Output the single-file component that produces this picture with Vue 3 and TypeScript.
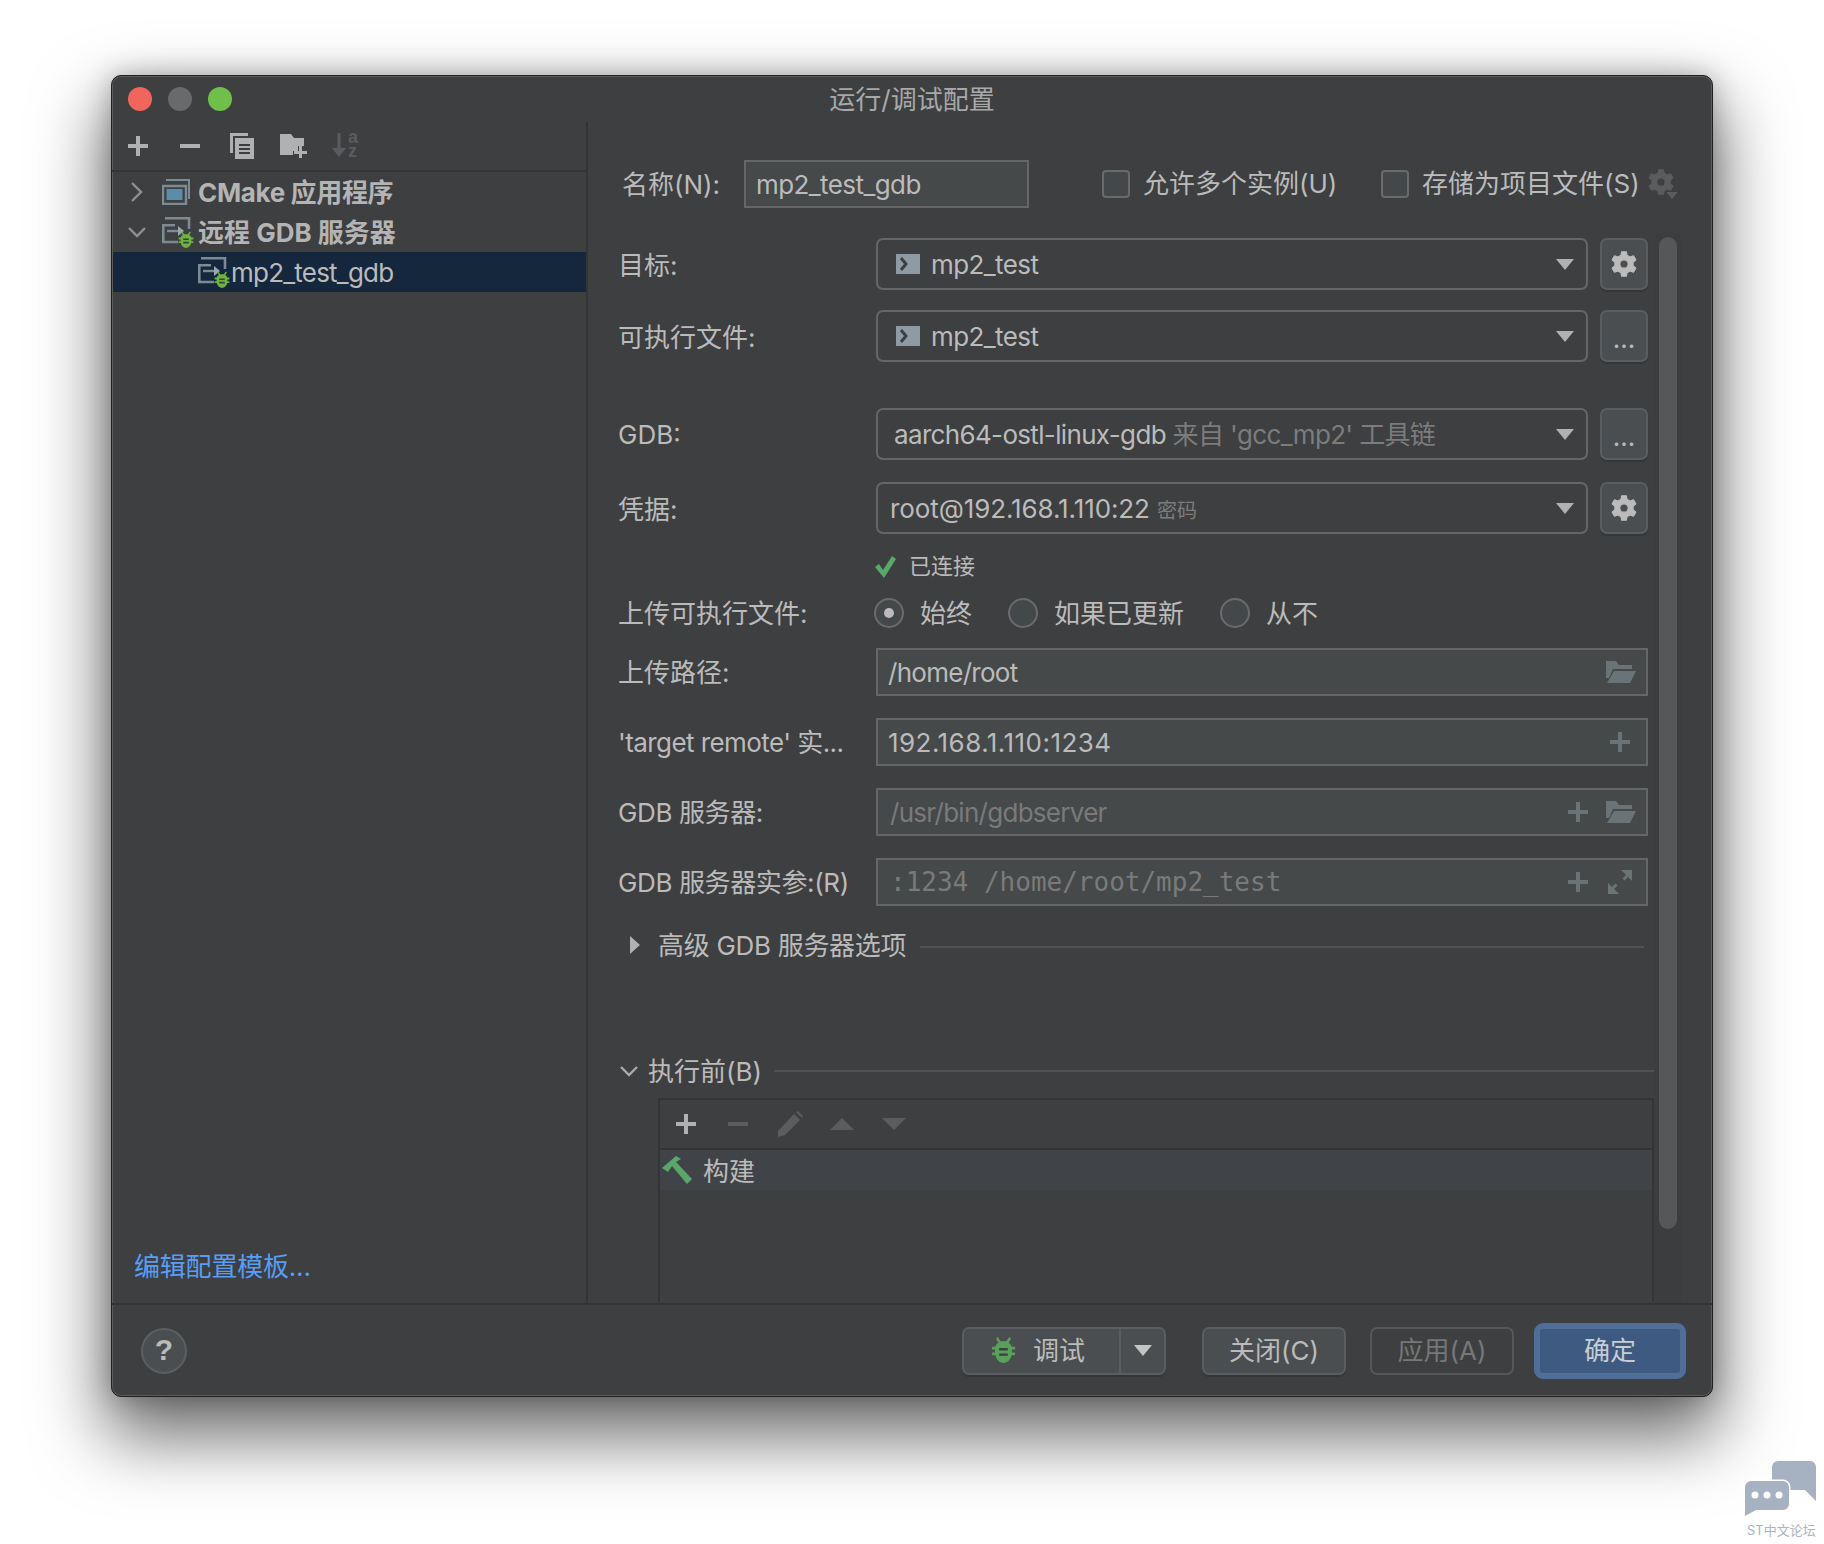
<script setup lang="ts">
function gear(teeth: number, outer: number, root: number, hole: number): string {
  const c = 14
  const step = (Math.PI * 2) / teeth
  const pts: string[] = []
  for (let i = 0; i < teeth; i++) {
    const a = i * step - Math.PI / 2
    const list: [number, number][] = [
      [a - step * 0.18, outer],
      [a + step * 0.18, outer],
      [a + step * 0.32, root],
      [a + step * 0.68, root],
    ]
    for (const [ang, r] of list) {
      pts.push(`${(c + Math.cos(ang) * r).toFixed(2)} ${(c + Math.sin(ang) * r).toFixed(2)}`)
    }
  }
  return `M${pts.join('L')}Z M${c - hole} ${c}a${hole} ${hole} 0 1 0 ${hole * 2} 0a${hole} ${hole} 0 1 0 ${-hole * 2} 0Z`
}
const gearPath = gear(6, 13.5, 10, 4.5)

const radios = [
  { label: '始终', on: true },
  { label: '如果已更新', on: false },
  { label: '从不', on: false },
]
</script>

<template>
  <div class="page">
    <svg class="defs" aria-hidden="true">
      <symbol id="plus" viewBox="0 0 20 20"><path d="M8 0h4v8h8v4h-8v8H8v-8H0V8h8z" fill="currentColor" /></symbol>
      <symbol id="gear" viewBox="0 0 28 28"><path :d="gearPath" fill="currentColor" fill-rule="evenodd" stroke="currentColor" stroke-width="1.2" stroke-linejoin="round" /></symbol>
      <symbol id="term" viewBox="0 0 24 20"><path d="M0 0h24v20H0z" fill="#8f9aa4" /><path d="M5 4l5 6-5 6" fill="none" stroke="#3c3f41" stroke-width="3" /></symbol>
      <symbol id="caret" viewBox="0 0 18 11"><path d="M0 0h18L9 11z" fill="currentColor" /></symbol>
      <symbol id="folder" viewBox="0 0 30 22"><path d="M0 0h10l3 4h13v4H7L3 17H0z M8 10h22l-6 12H1z" fill="currentColor" /></symbol>
      <symbol id="bug" viewBox="0 0 26 28">
        <path d="M7 0l3 4.5h6L19 0l2 1.5-2.8 4.5C20 7 21 8.500 21.500 10H25v3h-3.200v3H25v3h-3.500c-1 4.500-4.500 8-8.500 8s-7.500-3.500-8.500-8H1v-3h3.200v-3H1v-3h3.500C5 8.500 6 7 7.800 6L5 1.500z" fill="currentColor" />
        <path d="M8.500 11.500h9v2.500h-9zM8.500 17h9v2.500h-9z" fill="#3c3f41" />
      </symbol>
      <symbol id="remote" viewBox="0 0 32 30">
        <path d="M3 1.300h24V12" fill="none" stroke="#7c8a94" stroke-width="2.600" />
        <path d="M13 8.300H1.300V25H16" fill="none" stroke="#7c8a94" stroke-width="2.600" />
        <path d="M5 14h12" stroke="#7c8a94" stroke-width="2.400" />
        <path d="M16 9l6 5-6 5z" fill="#9aa7b0" />
      </symbol>
    </svg>

    <div class="window">
      <header class="titlebar">
        <div class="lights">
          <span class="light red"></span>
          <span class="light grey"></span>
          <span class="light green"></span>
        </div>
        <div class="title">运行/调试配置</div>
      </header>

      <div class="main">
        <aside class="left">
          <div class="tools">
            <span class="cell"><svg width="20" height="20" class="ic"><use href="#plus" /></svg></span>
            <span class="cell"><svg width="20" height="4" class="ic"><path d="M0 0h20v4H0z" fill="currentColor" /></svg></span>
            <span class="cell">
              <svg width="24" height="26" viewBox="0 0 24 26" class="ic">
                <path d="M0 0h18v3H3v17H0z" fill="currentColor" />
                <path d="M5 5h19v21H5z" fill="currentColor" />
                <path d="M9 11h11v2H9zM9 15h11v2H9zM9 19h11v2H9z" fill="#3c3f41" />
              </svg>
            </span>
            <span class="cell">
              <svg width="28" height="24" viewBox="0 0 28 24" class="ic">
                <path d="M0 0h11l3 4h10v8h-6v5h-5v4H0z" fill="currentColor" />
                <path d="M19 12h3v5h5v3h-5v4h-3v-4h-5v-3h5z" fill="currentColor" />
              </svg>
            </span>
            <span class="cell">
              <svg width="28" height="26" viewBox="0 0 28 26" class="ic dim sort">
                <path d="M5.500 0h3v15H14L7 24 0 15h5.500z" fill="currentColor" />
                <text x="16" y="10" class="az">a</text>
                <text x="16" y="24" class="az">z</text>
              </svg>
            </span>
          </div>

          <div class="tree">
            <div class="node">
              <span class="arrow"><svg width="14" height="20" viewBox="0 0 14 20"><path d="M2 1l9 9-9 9" fill="none" stroke="#8f9193" stroke-width="2.400" /></svg></span>
              <svg width="28" height="26" viewBox="0 0 28 26" class="node-ic">
                <path d="M4 1h23v19" fill="none" stroke="#7c8a94" stroke-width="2" />
                <path d="M1 7h23v18H1z" fill="none" stroke="#7c8a94" stroke-width="2.400" />
                <path d="M4.500 10h16v11h-16z" fill="#5a8dab" />
              </svg>
              <span class="node-text cmake">CMake 应用程序</span>
            </div>
            <div class="node">
              <span class="arrow"><svg width="18" height="11" viewBox="0 0 18 11"><path d="M1 1l8 8 8-8" fill="none" stroke="#8f9193" stroke-width="2.400" /></svg></span>
              <span class="remote branch">
                <svg width="32" height="30"><use href="#remote" /></svg>
                <svg width="16" height="18" class="remote-bug"><use href="#bug" /></svg>
              </span>
              <span class="node-text">远程 GDB 服务器</span>
            </div>
            <div class="node selected">
              <span class="remote">
                <svg width="32" height="30"><use href="#remote" /></svg>
                <svg width="16" height="18" class="remote-bug"><use href="#bug" /></svg>
              </span>
              <span class="leaf-text">mp2_test_gdb</span>
            </div>
          </div>
          <a class="link">编辑配置模板...</a>
        </aside>

        <section class="right">
          <div class="scrollbar"><div class="thumb"></div></div>

          <div class="name-row">
            <label class="name-label">名称(N):</label>
            <div class="input name-input"><span class="val name-val">mp2_test_gdb</span></div>
            <span class="check first"></span><span class="check-text wide">允许多个实例(U)</span>
            <span class="check second"></span><span class="check-text">存储为项目文件(S)</span>
            <span class="top-gear">
              <svg width="26" height="26" class="dim"><use href="#gear" /></svg>
              <svg width="12" height="7" class="gear-caret dim"><use href="#caret" /></svg>
            </span>
          </div>

          <div class="row combo-row r-target">
            <label>目标:</label>
            <div class="combo"><svg width="24" height="20"><use href="#term" /></svg><span class="combo-term">mp2_test</span><svg width="18" height="11" class="combo-caret"><use href="#caret" /></svg></div>
            <button class="side-btn"><svg width="26" height="26"><use href="#gear" /></svg></button>
          </div>
          <div class="row combo-row r-exe">
            <label>可执行文件:</label>
            <div class="combo"><svg width="24" height="20"><use href="#term" /></svg><span class="combo-term">mp2_test</span><svg width="18" height="11" class="combo-caret"><use href="#caret" /></svg></div>
            <button class="side-btn dots">...</button>
          </div>
          <div class="row combo-row r-gdb">
            <label class="latin">GDB:</label>
            <div class="combo tight"><span class="gdb-val">aarch64-ostl-linux-gdb <em>来自 'gcc_mp2' 工具链</em></span><svg width="18" height="11" class="combo-caret"><use href="#caret" /></svg></div>
            <button class="side-btn dots">...</button>
          </div>
          <div class="row combo-row r-cred">
            <label>凭据:</label>
            <div class="combo tighter"><span class="cred-val">root@192.168.1.110:22 <em class="small">密码</em></span><svg width="18" height="11" class="combo-caret"><use href="#caret" /></svg></div>
            <button class="side-btn"><svg width="26" height="26"><use href="#gear" /></svg></button>
          </div>

          <div class="status">
            <svg width="22" height="23" viewBox="0 0 22 23"><path d="M1 12l4-3 4 6L18 1l4 3-12 19z" fill="#59a869" /></svg>
            <span>已连接</span>
          </div>

          <div class="row radio-row">
            <label>上传可执行文件:</label>
            <div class="radios">
              <template v-for="r in radios" :key="r.label">
                <span class="radio" :class="{ on: r.on }"></span><span class="radio-text">{{ r.label }}</span>
              </template>
            </div>
          </div>

          <div class="row input-row r-up">
            <label>上传路径:</label>
            <div class="input"><span class="val cond">/home/root</span><svg width="30" height="22" class="field-ic"><use href="#folder" /></svg></div>
          </div>
          <div class="row input-row">
            <label class="remote-label">'target remote' 实...</label>
            <div class="input"><span class="val ip">192.168.1.110:1234</span><svg width="20" height="20" class="field-ic plus-only"><use href="#plus" /></svg></div>
          </div>
          <div class="row input-row">
            <label class="mixed">GDB 服务器:</label>
            <div class="input"><span class="val ph cond">/usr/bin/gdbserver</span><svg width="20" height="20" class="field-ic"><use href="#plus" /></svg><svg width="30" height="22" class="field-ic"><use href="#folder" /></svg></div>
          </div>
          <div class="row input-row">
            <label class="mixed">GDB 服务器实参:(R)</label>
            <div class="input">
              <span class="val ph mono">:1234 /home/root/mp2_test</span>
              <svg width="20" height="20" class="field-ic"><use href="#plus" /></svg>
              <svg width="24" height="24" viewBox="0 0 24 24" class="field-ic expand"><path d="M13 0h11v11l-4-4-3.500 3.500-2-2L18 5zM0 13l4 4 3.500-3.500 2 2L6 19l5 5H0z" fill="currentColor" /></svg>
            </div>
          </div>

          <div class="adv">
            <svg width="10" height="18" viewBox="0 0 10 18"><path d="M0 0l10 9-10 9z" fill="#afb1b3" /></svg>
            <span class="adv-text">高级 GDB 服务器选项</span>
            <span class="rule"></span>
          </div>

          <div class="before">
            <svg width="18" height="11" viewBox="0 0 18 11"><path d="M1 1l8 8 8-8" fill="none" stroke="#a8aaac" stroke-width="2.400" /></svg>
            <span class="before-text">执行前(B)</span>
            <span class="rule"></span>
          </div>

          <div class="table">
            <div class="table-tools">
              <span class="t-cell"><svg width="20" height="20" class="ic"><use href="#plus" /></svg></span>
              <span class="t-cell"><svg width="20" height="4" class="ic dim"><path d="M0 0h20v4H0z" fill="currentColor" /></svg></span>
              <span class="t-cell"><svg width="26" height="26" viewBox="0 0 26 26" class="ic dim"><path d="M17 3l6 6L8 24l-7 2v-6zM19 1l2-1 5 5-1 2z" fill="currentColor" /></svg></span>
              <span class="t-cell"><svg width="24" height="12" viewBox="0 0 24 12" class="ic dim"><path d="M12 0l12 12H0z" fill="currentColor" /></svg></span>
              <span class="t-cell"><svg width="24" height="12" viewBox="0 0 24 12" class="ic dim"><path d="M0 0h24L12 12z" fill="currentColor" /></svg></span>
            </div>
            <div class="table-row">
              <svg width="30" height="28" viewBox="0 0 30 28"><path d="M0 12L14 0l5 3-5 3 16 17-5 5L10 10l-4 6z" fill="#59a869" /></svg>
              <span>构建</span>
            </div>
          </div>
        </section>
      </div>

      <footer class="footer">
        <span class="help">?</span>
        <span class="spacer"></span>
        <div class="split">
          <span class="split-main"><svg width="25" height="27" class="debug-bug"><use href="#bug" /></svg><span>调试</span></span>
          <span class="split-caret"><svg width="18" height="11"><use href="#caret" /></svg></span>
        </div>
        <button class="btn close">关闭(C)</button>
        <button class="btn disabled">应用(A)</button>
        <button class="btn primary">确定</button>
      </footer>
    </div>

    <div class="mark">
      <svg width="72" height="55" viewBox="0 0 72 55">
        <path d="M33 0h32a6 6 0 0 1 6 6v34l-11-11H33a6 6 0 0 1-6-6V6a6 6 0 0 1 6-6z" fill="#a6b2c2" />
        <path d="M6 20h32a6 6 0 0 1 6 6v17a6 6 0 0 1-6 6H11L0 55V26a6 6 0 0 1 6-6z" fill="#a6b2c2" stroke="#fff" stroke-width="3" paint-order="stroke" />
        <circle cx="10" cy="34" r="3.500" fill="#fff" /><circle cx="22" cy="34" r="3.500" fill="#fff" /><circle cx="34" cy="34" r="3.500" fill="#fff" />
      </svg>
      <div class="mark-text">ST中文论坛</div>
    </div>
  </div>
</template>

<style scoped>
.page {
  position: relative;
  width: 1824px;
  height: 1544px;
  overflow: hidden;
  background: #fff;
  padding: 75px 0 0 111px;
  box-sizing: border-box;
  font-family: Inter, "Noto Sans CJK SC", sans-serif;
  font-size: 26px;
  color: #bbbbbb;
}
.defs { position: absolute; width: 0; height: 0; }
.window {
  width: 1602px;
  height: 1322px;
  box-sizing: border-box;
  display: flex;
  flex-direction: column;
  background: #3d3f41;
  border: 1px solid #1f1f1f;
  border-radius: 10px;
  box-shadow: inset 0 0 0 1px #5c5c5c, 0 34px 70px 6px rgba(0, 0, 0, 0.58), 0 0 26px rgba(0, 0, 0, 0.25);
}
.titlebar {
  height: 46px;
  flex: none;
  display: grid;
  grid-template-columns: 1fr auto 1fr;
  align-items: center;
}
.lights { display: flex; gap: 16px; padding-left: 16px; }
.light { width: 24px; height: 24px; border-radius: 50%; }
.red { background: #f0665a; }
.grey { background: #696a6c; }
.green { background: #6fc04a; }
.title { font-size: 26px; color: #a8a8a8; padding-bottom: 4px; }

.main { flex: 1; min-height: 0; display: flex; }
.left {
  width: 476px;
  flex: none;
  box-sizing: border-box;
  border-right: 2px solid #323436;
  display: flex;
  flex-direction: column;
}
.tools {
  height: 50px;
  box-sizing: border-box;
  border-bottom: 2px solid #323436;
  display: flex;
  align-items: center;
}
.cell { width: 52px; display: flex; justify-content: center; align-items: center; }
.ic { color: #afb1b3; display: block; }
.dim { color: #5a5c5e; }
.sort { overflow: visible; }
.az { font-family: "Liberation Sans", sans-serif; font-size: 18px; font-weight: 700; fill: #5a5c5e; }

.tree { flex: 1; }
.node { height: 40px; display: flex; align-items: center; position: relative; }
.arrow { width: 49px; display: flex; justify-content: center; }
.node-ic { margin: 0 8px 0 1px; }
.node-text { font-weight: 700; color: #b4b4b4; padding-bottom: 3px; }
.node-text.cmake { letter-spacing: -0.35px; }
.remote { position: relative; width: 37px; height: 30px; flex: none; }
.remote.branch { margin-left: 1px; width: 36px; }
.remote svg { display: block; }
.remote-bug { position: absolute; left: 16px; top: 14px; color: #6cb33f; }
.selected { background: #15273c; padding-left: 85px; margin-left: 1px; }
.selected .remote { width: 33px; }
.leaf-text { color: #bbbbbb; letter-spacing: -0.78px; }
.link { color: #589df6; padding: 0 0 21px 22px; line-height: 30px; letter-spacing: -0.2px; }

.right { flex: 1; min-width: 0; position: relative; padding-left: 30px; padding-right: 64px; }
.scrollbar {
  position: absolute;
  top: 112px;
  right: 31px;
  bottom: 0;
  width: 26px;
  background: #3b3d3f;
  padding: 3px 4px 0;
  box-sizing: border-box;
}
.thumb { height: 992px; width: 18px; background: #555759; border-radius: 9px; }

.name-row { height: 48px; margin-top: 38px; display: flex; align-items: center; padding-left: 4px; margin-right: -64px; }
.name-label { width: 122px; flex: none; padding-bottom: 3px; }
.input.name-input { width: 285px; flex: none; }
.name-val { letter-spacing: -0.58px; }
.check {
  width: 28px;
  height: 28px;
  box-sizing: border-box;
  border: 2px solid #6b6b6b;
  border-radius: 4px;
  background: #43494a;
  flex: none;
}
.check.first { margin-left: 73px; }
.check-text { margin-left: 13px; flex: none; padding-bottom: 6px; white-space: nowrap; }
.check-text.wide { width: 238px; }
.top-gear { position: relative; margin-left: 8px; width: 30px; height: 30px; }
.gear-caret { position: absolute; right: 0; bottom: 0; }

.row { display: flex; align-items: center; }
.row label { width: 258px; flex: none; white-space: nowrap; padding-bottom: 2px; }
.row label.latin { padding-bottom: 0; }
.row label.remote-label { letter-spacing: -0.57px; }
.row label.mixed { letter-spacing: -0.38px; }
.input-row label, .radio-row label { padding-bottom: 4px; }
.row.input-row label, .row.radio-row label { padding-bottom: 4px; }
.combo-row { height: 52px; }
.r-target { margin-top: 30px; }
.r-exe { margin-top: 20px; }
.r-gdb { margin-top: 46px; }
.r-cred { margin-top: 22px; }
.combo {
  width: 712px;
  height: 52px;
  flex: none;
  box-sizing: border-box;
  border: 2px solid #666666;
  border-radius: 7px;
  display: flex;
  align-items: center;
  padding-left: 18px;
}
.combo.tight { padding-left: 16px; }
.combo.tighter { padding-left: 12px; }
.combo em { font-style: normal; color: #7c7c7c; }
.combo em.small { font-size: 20px; }
.combo-term { margin-left: 11px; letter-spacing: -0.58px; }
.gdb-val { letter-spacing: -0.66px; padding-bottom: 4px; }
.cred-val { letter-spacing: -0.1px; }
.combo-caret { margin-left: auto; margin-right: 12px; color: #afb1b3; flex: none; }
.side-btn {
  margin-left: 12px;
  width: 48px;
  height: 52px;
  box-sizing: border-box;
  background: #4a4e50;
  border: 2px solid #5b5e60;
  border-radius: 7px;
  box-shadow: 0 2px 1px rgba(0, 0, 0, 0.15);
  color: #bbbbbb;
  display: flex;
  align-items: center;
  justify-content: center;
  padding: 0;
  font: inherit;
}
.side-btn.dots { align-items: flex-end; padding-bottom: 8px; line-height: 1; }

.status { height: 32px; margin-top: 16px; display: flex; align-items: center; padding-left: 256px; font-size: 22px; }
.status span { margin-left: 13px; padding-bottom: 5px; }
.radio-row { height: 30px; margin-top: 16px; }
.radios { display: flex; align-items: center; margin-left: -2px; }
.radio {
  width: 30px;
  height: 30px;
  box-sizing: border-box;
  border-radius: 50%;
  border: 2px solid #6b6b6b;
  background: #43494a;
  flex: none;
  display: flex;
  align-items: center;
  justify-content: center;
}
.radio.on::after { content: ""; width: 10px; height: 10px; border-radius: 50%; background: #bbbbbb; }
.radio-text { margin-left: 16px; margin-right: 36px; padding-bottom: 3px; }

.input-row { height: 48px; margin-top: 22px; }
.r-up { margin-top: 20px; }
.input {
  flex: 1;
  height: 48px;
  box-sizing: border-box;
  background: #45494a;
  border: 2px solid #666666;
  display: flex;
  align-items: center;
  padding: 0 10px;
  color: #bbbbbb;
}
.val { flex: 1; white-space: nowrap; }
.cond { letter-spacing: -0.72px; }
.ip { letter-spacing: 0.45px; }
.ph { color: #7a7a7a; padding-left: 2px; }
.mono { font-family: "DejaVu Sans Mono", monospace; font-size: 26px; padding-left: 2px; }
.field-ic { color: #6a7377; flex: none; margin-left: 18px; }
.field-ic.plus-only { margin-right: 6px; }
.field-ic.expand { margin-right: 4px; margin-left: 20px; }

.adv { height: 30px; margin-top: 24px; display: flex; align-items: center; padding-left: 12px; }
.adv-text { margin-left: 18px; padding-bottom: 3px; letter-spacing: -0.3px; }
.rule { flex: 1; height: 2px; background: #505254; }
.adv .rule { margin: 3px 4px 0 14px; }
.before { height: 30px; margin-top: 96px; display: flex; align-items: center; margin-right: -6px; padding-left: 2px; }
.before-text { margin-left: 10px; padding-bottom: 3px; }
.before .rule { margin-left: 12px; }

.table {
  margin-top: 12px;
  margin-left: 40px;
  margin-right: -6px;
  height: 204px;
  box-sizing: border-box;
  border: 2px solid #323436;
  border-bottom: 0;
}
.table-tools {
  height: 50px;
  box-sizing: border-box;
  border-bottom: 2px solid #323436;
  display: flex;
  align-items: center;
}
.t-cell { width: 52px; display: flex; justify-content: center; align-items: center; }
.table-row { height: 40px; background: #404448; display: flex; align-items: center; padding-left: 2px; }
.table-row span { margin-left: 11px; padding-bottom: 2px; }

.footer {
  height: 93px;
  flex: none;
  box-sizing: border-box;
  border-top: 2px solid #323436;
  display: flex;
  align-items: center;
  padding: 0 26px 0 29px;
}
.help {
  width: 46px;
  height: 46px;
  box-sizing: border-box;
  border-radius: 50%;
  background: #4a4e50;
  border: 2px solid #5c5f61;
  display: flex;
  align-items: center;
  justify-content: center;
  font-family: "Liberation Sans", sans-serif;
  font-weight: 700;
  font-size: 30px;
  padding-bottom: 2px;
}
.spacer { flex: 1; }
.split {
  width: 204px;
  height: 48px;
  box-sizing: border-box;
  background: #4a4e50;
  border: 2px solid #5b5e60;
  border-radius: 7px;
  box-shadow: 0 2px 1px rgba(0, 0, 0, 0.15);
  display: flex;
  margin-right: 36px;
}
.split-main { width: 157px; box-sizing: border-box; display: flex; align-items: center; padding-left: 27px; border-right: 2px solid #5b5e60; }
.split-main span { margin-left: 17px; padding-bottom: 5px; }
.debug-bug { color: #59a05a; }
.split-caret { flex: 1; display: flex; align-items: center; justify-content: center; color: #c4c4c4; }
.btn {
  width: 144px;
  height: 48px;
  box-sizing: border-box;
  border-radius: 7px;
  font: inherit;
  padding: 0 0 5px;
  color: #bbbbbb;
  background: #4a4e50;
  border: 2px solid #5b5e60;
  box-shadow: 0 2px 1px rgba(0, 0, 0, 0.15);
}
.close { margin-right: 24px; }
.disabled { background: transparent; color: #777777; box-shadow: none; border-color: #565759; margin-right: 20px; }
.primary { width: 152px; height: 56px; background: #3f5a80; border: 6px solid #4f6f98; border-radius: 9px; color: #c6cdd6; box-shadow: none; }

.mark { position: absolute; left: 1745px; top: 1461px; width: 74px; }
.mark svg { display: block; }
.mark-text { margin: 5px 0 0 2px; font-size: 13px; line-height: 18px; color: #a9b4c4; white-space: nowrap; }
</style>
